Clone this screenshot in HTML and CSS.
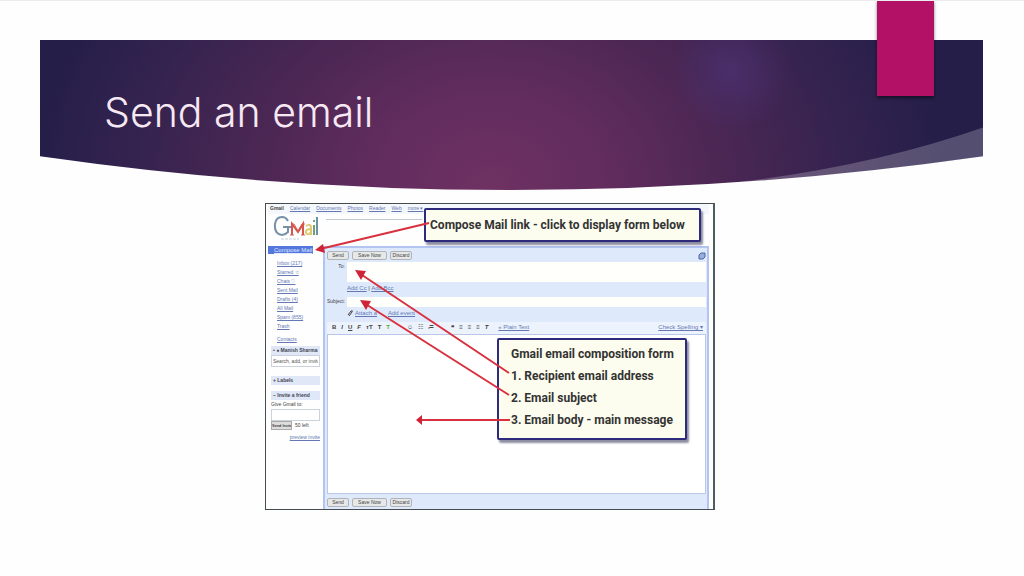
FILE: index.html
```html
<!DOCTYPE html>
<html lang="en">
<head>
    <meta charset="UTF-8">
    <meta name="viewport" content="width=device-width, initial-scale=1.0">
    <title>Send an email</title>
    <link rel="stylesheet" href="styles.css">
</head>
<body>

    <header class="banner">
        <svg class="banner-bg" viewBox="0 0 944 151" preserveAspectRatio="none" aria-hidden="true">
            <defs>
                <radialGradient id="glow" gradientUnits="userSpaceOnUse" cx="450" cy="0" r="480" gradientTransform="translate(0 145) scale(1 0.8)">
                    <stop offset="0" stop-color="#6e3162"/>
                    <stop offset="0.22" stop-color="#632d5f"/>
                    <stop offset="0.48" stop-color="#4c2754"/>
                    <stop offset="0.74" stop-color="#35234f"/>
                    <stop offset="0.96" stop-color="#241e49"/>
                </radialGradient>
                <radialGradient id="spot" gradientUnits="userSpaceOnUse" cx="692" cy="32" r="60">
                    <stop offset="0" stop-color="#4b3070" stop-opacity="0.8"/>
                    <stop offset="1" stop-color="#4b3070" stop-opacity="0"/>
                </radialGradient>
            </defs>
            <path d="M0 0H944V117Q708 151 472 151T0 117Z" fill="url(#glow)"/>
            <rect x="632" width="120" height="92" fill="url(#spot)"/>
            <path d="M690 144Q830 128 944 88V117Q820 136 690 144Z" fill="#fff" fill-opacity="0.22"/>
        </svg>
        <h1 class="title">Send an email</h1>
        <span class="ribbon"></span>
    </header>

    <main class="content">
        <section class="mail">
            <nav class="topnav">
                <b>Gmail</b>
                <a href="#">Calendar</a>
                <a href="#">Documents</a>
                <a href="#">Photos</a>
                <a href="#">Reader</a>
                <a href="#">Web</a>
                <a href="#">more ▾</a>
            </nav>

            <div class="brand">
                <svg class="logo" viewBox="0 0 46 28" role="img" aria-label="Gmail">
                    <path d="M15 6Q13 2 9 2Q3 2 2 9Q1 19 9 20Q12 20 15 17V12M10 12H18" fill="none" stroke="#7690a8" stroke-width="2"/>
                    <path d="M17 20H21M18 9H21L25 16L29 9H32M28 20H32" fill="none" stroke="#d9605a" stroke-width="1"/>
                    <path d="M19 20V9L25 17L30 9V20" fill="none" stroke="#d9534a" stroke-width="2"/>
                    <path d="M33 11Q38 8 38 13V20M38 14Q32 14 33 18Q35 21 38 17" fill="none" stroke="#e0c870" stroke-width="2"/>
                    <path d="M41 10V20M41 5V7" stroke="#6aa377" stroke-width="2"/>
                    <path d="M44 2V20" stroke="#6b93a3" stroke-width="2"/>
                    <path d="M8 24H26" stroke="#c4d0e2" stroke-dasharray="3 1"/>
                </svg>
                <span class="rule"></span>
            </div>

            <div class="columns">
                <aside class="sidebar">
                    <a class="compose" href="#">Compose Mail</a>
                    <ul class="folders">
                        <li><a href="#">Inbox (217)</a></li>
                        <li><a href="#">Starred ☆</a></li>
                        <li><a href="#">Chats ♡</a></li>
                        <li><a href="#">Sent Mail</a></li>
                        <li><a href="#">Drafts (4)</a></li>
                        <li><a href="#">All Mail</a></li>
                        <li><a href="#">Spam (855)</a></li>
                        <li><a href="#">Trash</a></li>
                    </ul>
                    <a class="contacts" href="#">Contacts</a>
                    <h2 class="box-title">• ● Manish Sharma</h2>
                    <input class="side-input" type="text" value="Search, add, or invite" aria-label="Search, add, or invite">
                    <h2 class="box-title labels">+ Labels</h2>
                    <h2 class="box-title">− Invite a friend</h2>
                    <label class="give" for="invite">Give Gmail to:</label>
                    <input class="side-input" type="text" id="invite">
                    <div class="invite-row">
                        <button class="send-invite" type="button">Send Invite</button>
                        <span>50 left</span>
                    </div>
                    <a class="preview" href="#">preview invite</a>
                </aside>

                <form class="form">
                    <div class="buttons">
                        <button type="button">Send</button>
                        <button type="button" class="save">Save Now</button>
                        <button type="button">Discard</button>
                        <svg class="popout" viewBox="0 0 8 8" aria-hidden="true"><path d="M3 1H7V5L5 7H1V3Z" fill="#9aaede" stroke="#4c64a8"/></svg>
                    </div>
                    <div class="field">
                        <label for="to">To:</label>
                        <input class="to" type="text" id="to">
                    </div>
                    <div class="extras"><a href="#">Add Cc</a> | <a href="#">Add Bcc</a></div>
                    <div class="field">
                        <label for="subject">Subject:</label>
                        <input class="subject" type="text" id="subject">
                    </div>
                    <div class="extras attach">
                        <svg class="clip" viewBox="0 0 6 8" aria-hidden="true"><path d="M1 6L4 2Q6 1 5 3L2 7" fill="none" stroke="#444"/></svg>
                        <a href="#">Attach a</a>
                        <a class="invitation" href="#">Add event</a>
                    </div>
                    <div class="toolbar">
                        <div class="tools">
                            <b>B</b><b><i>I</i></b><b><u>U</u></b><b><i>F</i></b><b>тT</b><b>T</b><b class="green">T</b><span class="gap">☺</span><span>☷</span><span>≔</span><b class="gap">❝</b><b>≡</b><b>≡</b><b>≡</b><b><i>T</i></b>
                            <a class="plain" href="#">« Plain Text</a>
                        </div>
                        <a href="#">Check Spelling ▾</a>
                    </div>
                    <textarea class="body" aria-label="Message"></textarea>
                    <div class="buttons bottom">
                        <button type="button">Send</button>
                        <button type="button" class="save">Save Now</button>
                        <button type="button">Discard</button>
                    </div>
                </form>
            </div>

            <p class="callout top-note">Compose Mail link - click to display form below</p>
            <div class="callout form-note">
                <p>Gmail email composition form</p>
                <p>1. Recipient email address</p>
                <p>2. Email subject</p>
                <p>3. Email body - main message</p>
            </div>

            <svg class="arrows" viewBox="0 0 450 307" aria-hidden="true">
                <g stroke="#d9303f" stroke-width="2">
                    <path d="M163 19L54 45M243 169L93 69M243 191L98 99M244 216H154"/>
                </g>
                <g fill="#cf2438">
                    <path d="M49 46L57 40L59 49Z"/>
                    <path d="M89 66L100 67L95 76Z"/>
                    <path d="M94 96L105 97L100 106Z"/>
                    <path d="M150 216L156 211V221Z"/>
                </g>
            </svg>
        </section>
    </main>

</body>
</html>
```

FILE: styles.css
```css
*{
    box-sizing: border-box;
}
body{
    margin: 0;
    min-height: 100vh;
    background-color: #fefefe;
    border-top: 1px solid #ececec;
    font-family: "Liberation Sans", Arial, sans-serif;
}
h1, h2, p, ul{
    margin: 0;
    padding: 0;
}

/* banner */
.banner{
    position: relative;
    margin: 39px 41px 0 40px;
    height: 150px;
    padding: 45px 64px;
}
.banner-bg{
    position: absolute;
    top: 0;
    left: 0;
    width: 100%;
    height: 100%;
}
.title{
    position: relative;
    font-family: "Century Gothic", Inter, sans-serif;
    font-weight: 300;
    font-size: 41px;
    line-height: 54px;
    color: #f6e9f3;
}
.ribbon{
    position: absolute;
    top: -40px;
    right: 49px;
    width: 57px;
    height: 96px;
    background: #b31166;
    box-shadow: 0 2px 3px rgba(0,0,0,0.5);
}

/* mail window */
.content{
    display: flex;
    justify-content: center;
    padding: 13px 44px 66px 0;
}
.mail{
    position: relative;
    width: 450px;
    padding: 0 4px 0 2px;
    border: 1px solid #444c50;
    border-right: 2px solid #4b5e62;
    background: #fdfefd;
    font-size: 6px;
    line-height: 9px;
    color: #444;
}
.mail a{
    color: #6478b4;
}
.topnav{
    display: flex;
    gap: 6px;
    height: 10px;
    padding-left: 2px;
    background: #f4f7fb;
    font-size: 5px;
}
.brand{
    display: flex;
    gap: 7px;
    height: 32px;
    padding: 1px 5px;
}
.logo{
    width: 46px;
    height: 28px;
}
.rule{
    width: 96px;
    height: 1px;
    margin-top: 4px;
    background: #c0c8d0;
}
.columns{
    display: flex;
    gap: 3px;
}

/* sidebar */
.sidebar{
    display: flex;
    flex-direction: column;
    width: 52px;
    white-space: nowrap;
}
.mail .compose{
    width: 45px;
    height: 8px;
    padding-left: 6px;
    line-height: 8px;
    background: #5577dd;
    color: #dfe8ff;
}
.folders{
    list-style: none;
    padding: 5px 0 4px 9px;
    font-size: 5px;
}
.contacts{
    padding-left: 9px;
    margin-bottom: 2px;
    font-size: 5px;
}
.box-title{
    margin-left: 3px;
    padding-left: 2px;
    font-size: 5px;
    line-height: 9px;
    background: #e0e7f6;
    color: #445;
}
.side-input{
    width: 49px;
    height: 12px;
    margin-left: 3px;
    padding: 0 1px;
    border: 1px solid #ccd2dc;
    background: #fff;
    font-family: inherit;
    font-size: 5px;
    color: #555;
}
.labels{
    margin-top: 9px;
    margin-bottom: 6px;
}
.give{
    padding-left: 3px;
    font-size: 5px;
}
.invite-row{
    display: flex;
    gap: 3px;
    padding: 0 0 3px 3px;
    font-size: 5px;
}
.send-invite{
    width: 21px;
    height: 9px;
    padding: 0;
    border: 1px solid #aaa;
    background: #ddd;
    font-family: inherit;
    font-size: 4px;
    line-height: 6px;
    white-space: nowrap;
    overflow: hidden;
}
.preview{
    align-self: flex-end;
    font-size: 5px;
}

/* compose form */
.form{
    flex: 1;
    min-width: 0;
    padding: 1px 1px 2px 2px;
    border: 2px solid #b2c4ef;
    border-bottom: none;
    background: #deeafb;
}
.buttons{
    display: flex;
    align-items: center;
    gap: 3px;
    height: 13px;
}
.buttons button{
    width: 22px;
    height: 9px;
    padding: 0;
    border: 1px solid #b0b4b8;
    border-radius: 2px;
    background: #e6e8e8;
    font-family: inherit;
    font-size: 5px;
    line-height: 7px;
    color: #444;
}
.buttons .save{
    width: 35px;
}
.bottom{
    padding-top: 3px;
}
.popout{
    width: 8px;
    height: 8px;
    margin-left: auto;
}
.field{
    display: flex;
    gap: 2px;
}
.field label{
    width: 18px;
    font-size: 5px;
    text-align: right;
}
.field input{
    flex: 1;
    min-width: 0;
    padding: 0;
    border: none;
    background: #fffffc;
}
.field .to{
    height: 20px;
}
.field .subject{
    height: 10px;
}
.extras{
    height: 15px;
    padding: 2px 0 0 20px;
}
.attach{
    display: flex;
    gap: 2px;
}
.clip{
    width: 6px;
    height: 8px;
}
.attach .invitation{
    margin-left: 9px;
}
.toolbar{
    display: flex;
    justify-content: space-between;
    height: 12px;
    padding: 1px 3px 0 5px;
    background: #edf3fc;
}
.tools{
    display: flex;
    gap: 5px;
}
.tools .green{
    color: #58a53c;
}
.tools .gap{
    margin-left: 12px;
}
.tools .plain{
    margin-left: 5px;
}
.body{
    display: block;
    width: 100%;
    height: 160px;
    border: 1px solid #b9c8e8;
    background: #fff;
    resize: none;
}

/* notes over the window */
.callout{
    position: absolute;
    border: 2px solid #2e2b7c;
    border-radius: 2px;
    background: #fcfdee;
    box-shadow: 2px 3px 2px rgba(30,30,70,0.5);
    font-family: Roboto, Arial, sans-serif;
    font-weight: bold;
    font-size: 12px;
    color: #333;
    white-space: nowrap;
}
.top-note{
    top: 4px;
    left: 158px;
    width: 277px;
    padding-left: 4px;
    line-height: 30px;
}
.form-note{
    top: 134px;
    left: 231px;
    width: 190px;
    padding: 3px 0 7px 12px;
    line-height: 22px;
}
.arrows{
    position: absolute;
    top: 0;
    left: 0;
    width: 450px;
    height: 307px;
}
```
